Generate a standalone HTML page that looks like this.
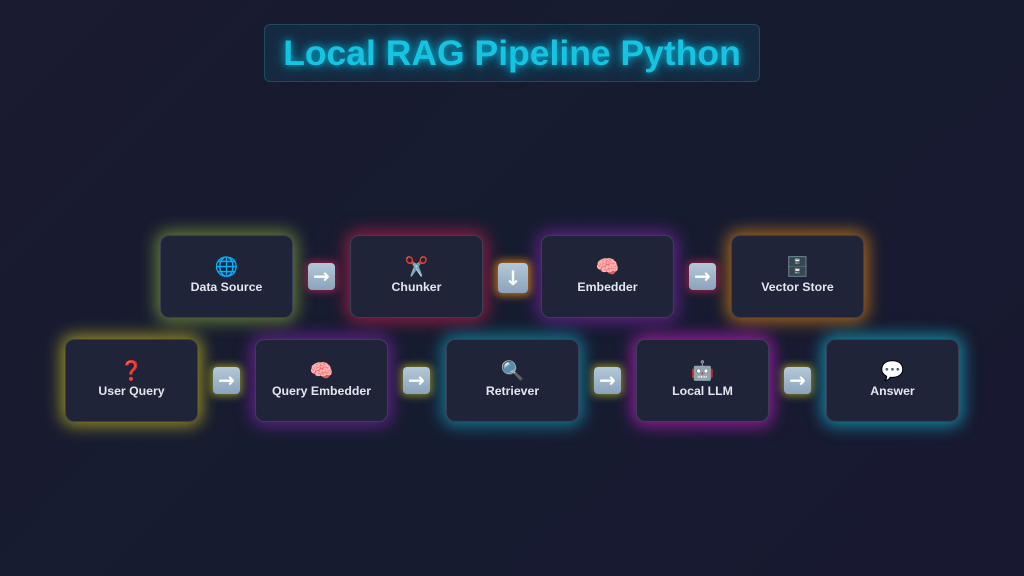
<!DOCTYPE html>
<html><head><meta charset="utf-8"><style>
*{margin:0;padding:0;box-sizing:border-box}
body{width:1024px;height:576px;overflow:hidden;background:linear-gradient(135deg,#1a1a30 0%,#161c30 50%,#181830 100%);font-family:"Liberation Sans",sans-serif;position:relative}
.title{position:absolute;left:264px;top:24px;width:496px;height:58px;border:1px solid #1d4a60;border-radius:6px;background:rgba(20,60,85,.45);color:#14c4e0;font-weight:bold;font-size:35.5px;text-align:center;line-height:57px;text-shadow:0 0 8px rgba(0,200,240,.8),0 0 16px rgba(0,200,240,.5)}
.box{position:absolute;width:133px;height:83px;border-radius:9px;background:#1f2439;border:1px solid #3a3f55;color:#e4e6ee;font-weight:bold;font-size:12.3px;text-align:center}
.box .ic{display:block;font-size:19px;margin-top:19px;height:24px;line-height:24px;font-family:"Noto Color Emoji","DejaVu Sans",sans-serif}
.box .t{display:block;margin-top:1px}
.ar{position:absolute;width:27px;height:27px;border-radius:4px;background:linear-gradient(#b4c8d8,#8aa4bc);color:#fff;font-size:20px;line-height:26px;text-align:center;font-weight:bold;font-family:"DejaVu Sans",sans-serif}
</style></head><body>
<div class="title">Local RAG Pipeline Python</div>

<div class="box" style="left:160px;top:235px;box-shadow:0 0 16px 4px rgba(150,190,60,.6)"><span class="ic" style="color:#1e90e0">🌐</span><span class="t">Data Source</span></div>
<div class="box" style="left:350px;top:235px;box-shadow:0 0 16px 4px rgba(220,30,80,.6)"><span class="ic" style="color:#d33">✂</span><span class="t">Chunker</span></div>
<div class="box" style="left:541px;top:235px;box-shadow:0 0 16px 4px rgba(150,40,200,.55)"><span class="ic" style="color:#f49">🧠</span><span class="t">Embedder</span></div>
<div class="box" style="left:731px;top:235px;box-shadow:0 0 16px 4px rgba(240,140,20,.65)"><span class="ic" style="color:#999">🗄</span><span class="t">Vector Store</span></div>

<div class="ar" style="left:308px;top:263px;box-shadow:0 0 8px 2px rgba(220,40,90,.6)">→</div>
<div class="ar" style="left:498px;top:263px;width:30px;height:30px;line-height:30px;box-shadow:0 0 8px 3px rgba(240,140,20,.7)">↓</div>
<div class="ar" style="left:689px;top:263px;box-shadow:0 0 8px 2px rgba(220,40,90,.6)">→</div>

<div class="box" style="left:65px;top:339px;box-shadow:0 0 16px 4px rgba(210,200,30,.65)"><span class="ic" style="color:#e22">❓</span><span class="t">User Query</span></div>
<div class="box" style="left:255px;top:339px;box-shadow:0 0 16px 4px rgba(150,40,200,.55)"><span class="ic" style="color:#f49">🧠</span><span class="t">Query Embedder</span></div>
<div class="box" style="left:446px;top:339px;box-shadow:0 0 16px 4px rgba(20,180,210,.6)"><span class="ic" style="color:#4af">🔍</span><span class="t">Retriever</span></div>
<div class="box" style="left:636px;top:339px;box-shadow:0 0 16px 4px rgba(210,30,210,.65)"><span class="ic" style="color:#aab">🤖</span><span class="t">Local LLM</span></div>
<div class="box" style="left:826px;top:339px;box-shadow:0 0 16px 4px rgba(20,190,220,.65)"><span class="ic" style="color:#eee">💬</span><span class="t">Answer</span></div>

<div class="ar" style="left:213px;top:367px;box-shadow:0 0 8px 2px rgba(200,200,40,.6)">→</div>
<div class="ar" style="left:403px;top:367px;box-shadow:0 0 8px 2px rgba(200,200,40,.6)">→</div>
<div class="ar" style="left:594px;top:367px;box-shadow:0 0 8px 2px rgba(200,200,40,.6)">→</div>
<div class="ar" style="left:784px;top:367px;box-shadow:0 0 8px 2px rgba(200,200,40,.6)">→</div>
</body></html>
